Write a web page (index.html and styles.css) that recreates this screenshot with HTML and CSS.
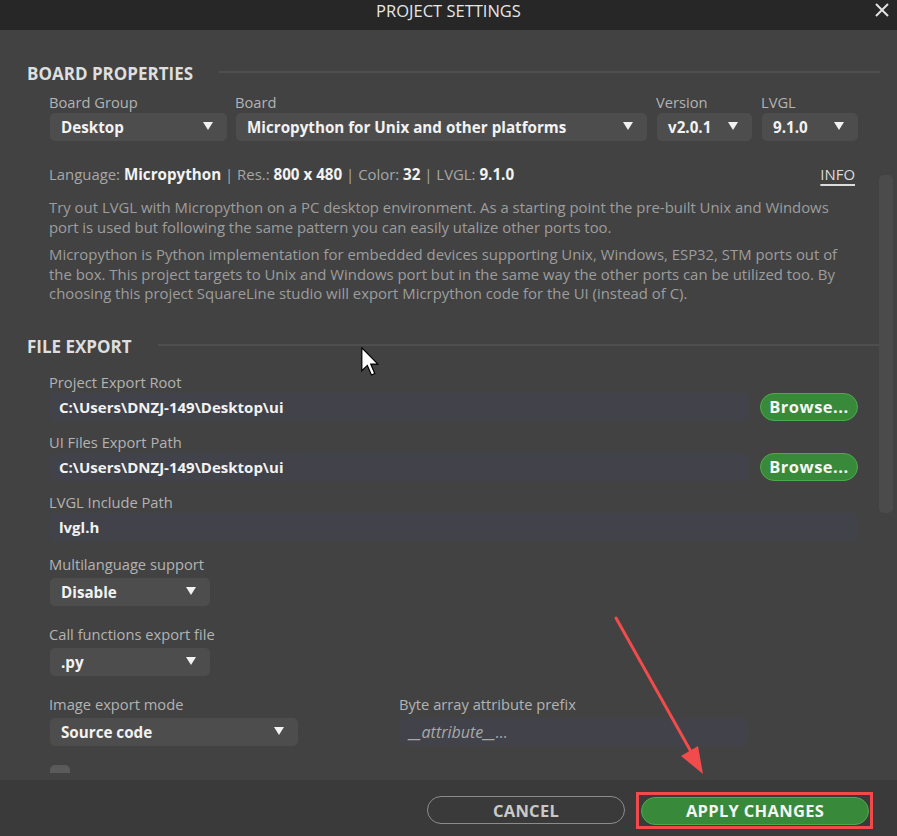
FILE: index.html
```html
<!DOCTYPE html>
<html lang="en">
<head>
  <meta charset="UTF-8">
  <title>Project Settings</title>
  <link rel="stylesheet" href="styles.css">
</head>
<body>
  <div class="dialog">
    <div class="titlebar">
      <span class="title">PROJECT SETTINGS</span>
      <svg class="close" width="14" height="14" viewBox="0 0 14 14">
        <path d="M1 1 L13 13 M13 1 L1 13" stroke="#e2e2e2" stroke-width="2" fill="none"/>
      </svg>
    </div>

    <div class="body">
      <div class="scroll">
        <div class="heading">BOARD PROPERTIES</div>

        <div class="board-row">
          <div class="col w-group">
            <div class="label">Board Group</div>
            <div class="dropdown">Desktop <i class="caret"></i></div>
          </div>
          <div class="col w-board">
            <div class="label">Board</div>
            <div class="dropdown">Micropython for Unix and other platforms <i class="caret"></i></div>
          </div>
          <div class="col w-ver">
            <div class="label">Version</div>
            <div class="dropdown">v2.0.1 <i class="caret"></i></div>
          </div>
          <div class="col w-ver2">
            <div class="label">LVGL</div>
            <div class="dropdown">9.1.0 <i class="caret"></i></div>
          </div>
        </div>

        <div class="info">
          <span>Language: <b>Micropython</b> | Res.: <b>800 x 480</b> | Color: <b>32</b> | LVGL: <b>9.1.0</b></span>
          <span class="info-link">INFO</span>
        </div>
        <p class="desc first">Try out LVGL with Micropython on a PC desktop environment. As a starting point the pre-built Unix and Windows port is used but following the same pattern you can easily utalize other ports too.</p>
        <p class="desc">Micropython is Python implementation for embedded devices supporting Unix, Windows, ESP32, STM ports out of the box. This project targets to Unix and Windows port but in the same way the other ports can be utilized too. By choosing this project SquareLine studio will export Micrpython code for the UI (instead of C).</p>

        <div class="heading second">FILE EXPORT</div>

        <div class="field">
          <div class="label">Project Export Root</div>
          <div class="path-row">
            <div class="input">C:\Users\DNZJ-149\Desktop\ui</div>
            <div class="browse">Browse...</div>
          </div>
        </div>
        <div class="field">
          <div class="label">UI Files Export Path</div>
          <div class="path-row">
            <div class="input">C:\Users\DNZJ-149\Desktop\ui</div>
            <div class="browse">Browse...</div>
          </div>
        </div>
        <div class="field">
          <div class="label">LVGL Include Path</div>
          <div class="input">lvgl.h</div>
        </div>

        <div class="field wide">
          <div class="label">Multilanguage support</div>
          <div class="dropdown small">Disable <i class="caret"></i></div>
        </div>
        <div class="field wide">
          <div class="label">Call functions export file</div>
          <div class="dropdown small">.py <i class="caret"></i></div>
        </div>
        <div class="field wide two-col">
          <div class="col w-mode">
            <div class="label">Image export mode</div>
            <div class="dropdown">Source code <i class="caret"></i></div>
          </div>
          <div class="col w-prefix">
            <div class="label">Byte array attribute prefix</div>
            <div class="input placeholder">__attribute__...</div>
          </div>
        </div>
        <div class="check-row">
          <span class="checkbox"></span>
          <span class="check-label">Export as one file</span>
        </div>
      </div>
      <div class="scrollbar"></div>
    </div>

    <div class="footer">
      <div class="btn cancel">CANCEL</div>
      <div class="highlight">
        <div class="btn apply">APPLY CHANGES</div>
      </div>
    </div>

    <svg class="arrow" width="897" height="836" viewBox="0 0 897 836">
      <path d="M616 618 L694 757" stroke="#f24b4b" stroke-width="3" stroke-linecap="round" fill="none"/>
      <path d="M703 774 L681 756 L698 746 Z" fill="#f24b4b"/>
    </svg>
    <svg class="cursor" width="18" height="29" viewBox="0 0 12 19.5">
      <path d="M0.5 0.5 L0.5 16 L4.2 12.4 L7 18.8 L9.2 17.8 L6.5 11.5 L11.3 11.5 Z" fill="#fff" stroke="#000" stroke-width="0.8" stroke-linejoin="miter"/>
    </svg>
  </div>
</body>
</html>
```

FILE: styles.css
```css
html, body {
  margin: 0;
  background: #2a2a2a;
}
body {
  font-family: "Open Sans", "Liberation Sans", sans-serif;
  font-size: 14.7px;
  color: #e8e8e8;
}
.dialog {
  position: relative;
  width: 897px;
  height: 836px;
  display: flex;
  flex-direction: column;
  background: #424242;
  overflow: hidden;
}
.titlebar {
  height: 30px;
  flex-shrink: 0;
  background: #272727;
  display: flex;
  align-items: center;
  justify-content: center;
  position: relative;
}
.title {
  font-size: 16.5px;
  color: #e6e6e6;
  margin-top: -10px;
}
.close {
  position: absolute;
  right: 8px;
  top: 3px;
}
.body {
  flex: 1;
  position: relative;
  display: flex;
  flex-direction: column;
  padding-bottom: 7px;
  min-height: 0;
}
.scroll {
  flex: 1;
  overflow: hidden;
  padding: 35px 17px 0 27px;
}
.scrollbar {
  position: absolute;
  left: 879px;
  top: 145px;
  width: 14px;
  height: 338px;
  border-radius: 5px;
  background: #4b4b4b;
}
.heading {
  display: flex;
  align-items: center;
  font-size: 17px;
  font-weight: 700;
  line-height: 18px;
  color: #dedede;
  margin-bottom: 10px;
}
.heading::after {
  content: "";
  flex: 1;
  height: 2px;
  margin-left: 26px;
  margin-top: -4px;
  background: #4f4f4f;
}
.heading.second {
  margin-top: 34px;
  margin-bottom: 17px;
}
.board-row {
  display: flex;
  gap: 9px;
  margin-left: 23px;
  width: 808px;
}
.col {
  display: flex;
  flex-direction: column;
}
.w-group { width: 177px; }
.w-board { width: 411px; margin-right: 1px; }
.w-ver { width: 95px; margin-right: 1px; }
.w-ver2 { width: 96px; }
.label {
  line-height: 18px;
  color: #b3b3b3;
  margin-left: -1px;
  margin-bottom: 2px;
  white-space: nowrap;
}
.dropdown {
  height: 28px;
  box-sizing: border-box;
  border-radius: 5px;
  background: #4d4d4d;
  display: flex;
  align-items: center;
  justify-content: space-between;
  padding: 0 14px 0 11px;
  font-weight: 700;
  font-size: 15.2px;
  color: #f2f2f2;
  white-space: nowrap;
}
.caret {
  width: 0;
  height: 0;
  border-left: 5px solid transparent;
  border-right: 5px solid transparent;
  border-top: 8px solid #f2f2f2;
  margin-top: -2px;
}
.info {
  display: flex;
  justify-content: space-between;
  margin: 23px 25px 0 22px;
  line-height: 20px;
  font-size: 14.9px;
  color: #a7a7a7;
}
.info b {
  font-size: 15.2px;
  color: #f2f2f2;
}
.info-link {
  color: #dcdcdc;
  text-decoration: underline;
  text-decoration-thickness: 2px;
  text-underline-offset: 4px;
}
.desc {
  margin: 8px 22px 0 22px;
  line-height: 19.5px;
  font-size: 14.9px;
  color: #9d9d9d;
}
.desc.first {
  margin-top: 14px;
}
.field {
  margin-left: 23px;
  width: 808px;
  margin-bottom: 12px;
}
.field.wide {
  margin-bottom: 19px;
}
.field.wide .label {
  margin-bottom: 5px;
}
.field + .field.wide {
  margin-top: 14px;
}
.field.wide + .field.wide {
  margin-top: 0;
}
.path-row {
  display: flex;
  gap: 11px;
}
.input {
  flex: 1;
  height: 28px;
  box-sizing: border-box;
  border-radius: 5px;
  background: #41424a;
  display: flex;
  align-items: center;
  padding-left: 9px;
  font-weight: 700;
  font-size: 15px;
  color: #f2f2f2;
  white-space: nowrap;
}
.input.placeholder {
  font-weight: 400;
  font-style: italic;
  font-size: 16px;
  color: #a9a9a9;
}
.browse {
  width: 98px;
  height: 28px;
  box-sizing: border-box;
  border-radius: 14px;
  background: #388a3a;
  border: 1px solid #4caa4e;
  display: flex;
  align-items: center;
  justify-content: center;
  font-weight: 700;
  font-size: 16.5px;
  letter-spacing: 0.5px;
  color: #f4f4f4;
}
.dropdown.small {
  width: 160px;
}
.two-col {
  display: flex;
}
.w-mode { width: 248px; margin-right: 102px; }
.w-prefix { width: 348px; }
.check-row {
  display: flex;
  align-items: flex-start;
  gap: 12px;
  margin-left: 23px;
  margin-top: 3px;
}
.checkbox {
  width: 20px;
  height: 20px;
  border-radius: 5px;
  background: #5a5a5a;
}
.check-label {
  font-weight: 700;
  font-size: 15px;
  line-height: 20px;
  margin-top: 3px;
}
.footer {
  height: 56px;
  box-sizing: border-box;
  flex-shrink: 0;
  background: #3a3a3a;
  display: flex;
  align-items: center;
  justify-content: flex-end;
  gap: 11px;
  padding: 4px 24px 0 0;
  position: relative;
  z-index: 1;
}
.btn {
  height: 28px;
  box-sizing: border-box;
  border-radius: 14px;
  display: flex;
  align-items: center;
  justify-content: center;
  font-weight: 700;
  font-size: 16.5px;
  letter-spacing: 0.3px;
}
.cancel {
  width: 198px;
  border: 1px solid #8c8c8c;
  color: #c9c9c9;
}
.highlight {
  border: 3px solid #f04a4a;
  padding: 2px 1px 1px 2px;
}
.apply {
  width: 228px;
  background: #388a3a;
  border: 1px solid #4caa4e;
  color: #f4f4f4;
}
.arrow {
  position: absolute;
  left: 0;
  top: 0;
  z-index: 2;
  pointer-events: none;
}
.cursor {
  position: absolute;
  left: 361px;
  top: 347px;
  z-index: 2;
}
```
